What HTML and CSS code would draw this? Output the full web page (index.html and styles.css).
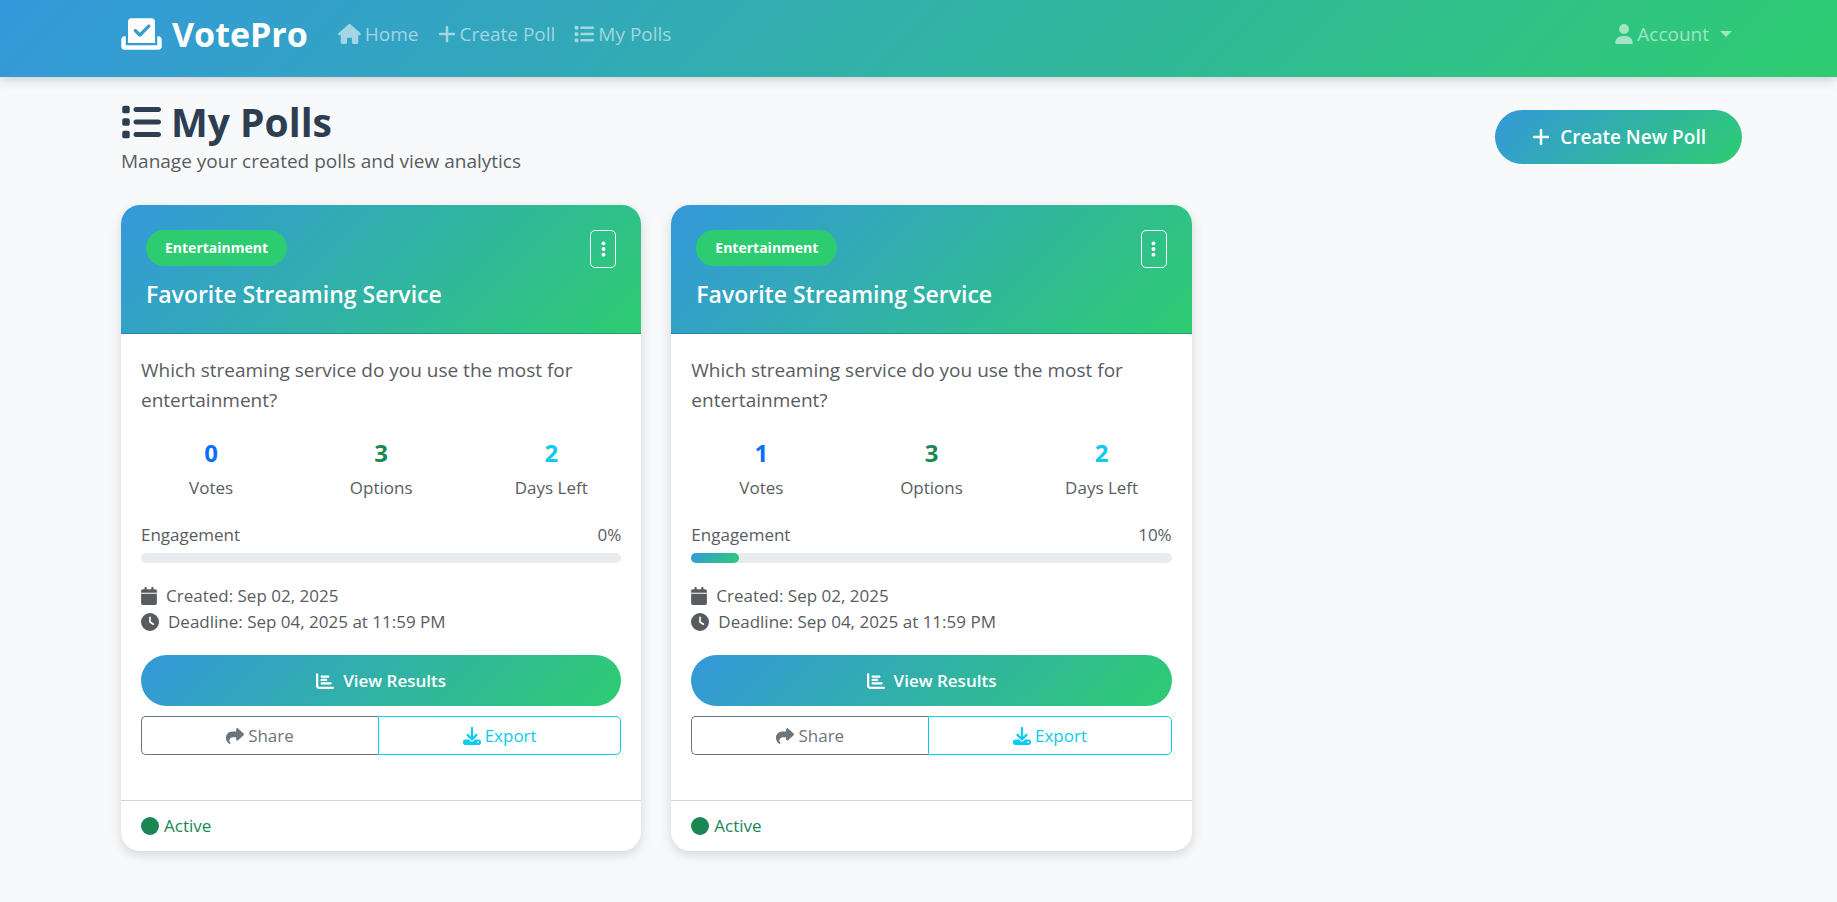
FILE: index.html
```html
<!DOCTYPE html>
<html lang="en">
<head>
<meta charset="utf-8">
<meta name="viewport" content="width=device-width, initial-scale=1">
<title>My Polls - VotePro</title>
<link rel="stylesheet" href="styles.css">
</head>
<body>
<svg class="sprite" aria-hidden="true">
  <symbol id="i-vote" viewBox="0 0 576 512"><path d="M96 80c0-26.500 21.500-48 48-48H432c26.500 0 48 21.500 48 48V384H96V80zm313 47c-9.400-9.400-24.600-9.400-33.900 0l-111 111-47-47c-9.400-9.400-24.600-9.400-33.900 0s-9.400 24.600 0 33.900l64 64c9.400 9.400 24.600 9.400 33.900 0L409 161c9.400-9.400 9.400-24.600 0-33.900zM0 336c0-26.500 21.500-48 48-48H64V416H512V288h16c26.500 0 48 21.500 48 48v96c0 26.500-21.500 48-48 48H48c-26.500 0-48-21.500-48-48V336z"/></symbol>
  <symbol id="i-home" viewBox="0 0 576 512"><path d="M575.800 255.500c0 18-15 32.100-32 32.100h-32l.7 160.200c0 2.700-.2 5.400-.5 8.100V472c0 22.100-17.900 40-40 40H456c-1.100 0-2.200 0-3.300-.1c-1.400 .1-2.800 .1-4.200 .1H416 392c-22.100 0-40-17.900-40-40V448 384c0-17.700-14.300-32-32-32H256c-17.700 0-32 14.300-32 32v64 24c0 22.100-17.900 40-40 40H160 128.100c-1.500 0-3-.1-4.500-.2c-1.200 .1-2.400 .2-3.600 .2H104c-22.100 0-40-17.900-40-40V360c0-.9 0-1.900 .1-2.800V287.600H32c-18 0-32-14-32-32.100c0-9 3-17 10-24L266.400 8c7-7 15-8 22-8s15 2 21 7L564.800 231.500c8 7 12 15 11 24z"/></symbol>
  <symbol id="i-plus" viewBox="0 0 448 512"><path d="M256 80c0-17.700-14.300-32-32-32s-32 14.300-32 32V224H48c-17.700 0-32 14.300-32 32s14.300 32 32 32H192V432c0 17.700 14.300 32 32 32s32-14.300 32-32V288H400c17.700 0 32-14.300 32-32s-14.300-32-32-32H256V80z"/></symbol>
  <symbol id="i-list" viewBox="0 0 512 512"><path d="M40 48C26.700 48 16 58.700 16 72v48c0 13.300 10.700 24 24 24H88c13.300 0 24-10.700 24-24V72c0-13.300-10.700-24-24-24H40zM192 64c-17.700 0-32 14.300-32 32s14.300 32 32 32H480c17.700 0 32-14.300 32-32s-14.300-32-32-32H192zm0 160c-17.700 0-32 14.300-32 32s14.300 32 32 32H480c17.700 0 32-14.300 32-32s-14.300-32-32-32H192zm0 160c-17.700 0-32 14.300-32 32s14.300 32 32 32H480c17.700 0 32-14.300 32-32s-14.300-32-32-32H192zM16 232v48c0 13.300 10.700 24 24 24H88c13.300 0 24-10.700 24-24V232c0-13.300-10.700-24-24-24H40c-13.300 0-24 10.700-24 24zM40 368c-13.300 0-24 10.700-24 24v48c0 13.300 10.700 24 24 24H88c13.300 0 24-10.700 24-24V392c0-13.300-10.700-24-24-24H40z"/></symbol>
  <symbol id="i-user" viewBox="0 0 448 512"><path d="M224 256A128 128 0 1 0 224 0a128 128 0 1 0 0 256zm-45.700 48C79.800 304 0 383.800 0 482.300C0 498.700 13.300 512 29.700 512H418.300c16.400 0 29.700-13.300 29.700-29.700C448 383.800 368.200 304 269.700 304H178.300z"/></symbol>
  <symbol id="i-dots" viewBox="0 0 128 512"><path d="M64 360a56 56 0 1 0 0 112 56 56 0 1 0 0-112zm0-160a56 56 0 1 0 0 112 56 56 0 1 0 0-112zM120 96A56 56 0 1 0 8 96a56 56 0 1 0 112 0z"/></symbol>
  <symbol id="i-calendar" viewBox="0 0 448 512"><path d="M96 32V64H48C21.500 64 0 85.500 0 112v48H448V112c0-26.500-21.500-48-48-48H352V32c0-17.700-14.300-32-32-32s-32 14.300-32 32V64H160V32c0-17.700-14.300-32-32-32S96 14.300 96 32zM448 192H0V464c0 26.500 21.500 48 48 48H400c26.500 0 48-21.500 48-48V192z"/></symbol>
  <symbol id="i-clock" viewBox="0 0 512 512"><path d="M256 0a256 256 0 1 1 0 512A256 256 0 1 1 256 0zM232 120V256c0 8 4 15.500 10.700 20l96 64c11 7.400 25.900 4.400 33.300-6.700s4.400-25.900-6.700-33.300L280 243.200V120c0-13.300-10.700-24-24-24s-24 10.700-24 24z"/></symbol>
  <symbol id="i-chart" viewBox="0 0 512 512"><path d="M32 32c17.700 0 32 14.300 32 32V400c0 8.800 7.200 16 16 16H480c17.700 0 32 14.300 32 32s-14.300 32-32 32H80c-44.200 0-80-35.800-80-80V64C0 46.300 14.300 32 32 32zm96 96c0-17.700 14.300-32 32-32l192 0c17.700 0 32 14.300 32 32s-14.300 32-32 32l-192 0c-17.700 0-32-14.300-32-32zm32 64H288c17.700 0 32 14.300 32 32s-14.300 32-32 32H160c-17.700 0-32-14.300-32-32s14.300-32 32-32zm0 96H416c17.700 0 32 14.300 32 32s-14.300 32-32 32H160c-17.700 0-32-14.300-32-32s14.300-32 32-32z"/></symbol>
  <symbol id="i-share" viewBox="0 0 512 512"><path d="M307 34.800c-11.500 5.100-19 16.600-19 29.200v64H176C78.800 128 0 206.800 0 304C0 417.300 81.500 467.900 100.200 478.100c2.500 1.400 5.300 1.900 8.100 1.900c10.900 0 19.700-8.900 19.700-19.700c0-7.500-4.300-14.400-9.800-19.500C108.800 431.900 96 414.400 96 384c0-53 43-96 96-96h96v64c0 12.600 7.400 24.100 19 29.200s25 3 34.400-5.400l160-144c6.700-6.100 10.600-14.700 10.600-23.800s-3.800-17.700-10.600-23.800l-160-144c-9.400-8.500-22.900-10.600-34.400-5.400z"/></symbol>
  <symbol id="i-download" viewBox="0 0 512 512"><path d="M288 32c0-17.700-14.300-32-32-32s-32 14.300-32 32V274.700l-73.400-73.400c-12.500-12.500-32.800-12.500-45.300 0s-12.500 32.800 0 45.300l128 128c12.500 12.500 32.800 12.500 45.300 0l128-128c12.500-12.500 12.500-32.800 0-45.300s-32.800-12.500-45.300 0L288 274.700V32zM64 352c-35.300 0-64 28.700-64 64v32c0 35.300 28.700 64 64 64H448c35.300 0 64-28.700 64-64V416c0-35.300-28.700-64-64-64H346.500l-45.300 45.300c-25 25-65.500 25-90.500 0L165.500 352H64zm368 56a24 24 0 1 1 0 48 24 24 0 1 1 0-48z"/></symbol>
  <symbol id="i-circle" viewBox="0 0 512 512"><circle cx="256" cy="256" r="256"/></symbol>
</svg>

<header class="navbar">
  <a class="brand" href="#"><svg class="icon icon-wide-lg"><use href="#i-vote"/></svg>VotePro</a>
  <nav class="nav-links">
    <a class="nav-link" href="#"><svg class="icon icon-wide"><use href="#i-home"/></svg>Home</a>
    <a class="nav-link" href="#"><svg class="icon icon-narrow"><use href="#i-plus"/></svg>Create Poll</a>
    <a class="nav-link" href="#"><svg class="icon icon-square"><use href="#i-list"/></svg>My Polls</a>
  </nav>
  <button class="nav-link account" type="button"><svg class="icon icon-narrow"><use href="#i-user"/></svg>Account<span class="caret"></span></button>
</header>

<main class="page">
  <div class="page-head">
    <div>
      <h1 class="page-title"><svg class="icon icon-title"><use href="#i-list"/></svg>My Polls</h1>
      <p class="page-subtitle">Manage your created polls and view analytics</p>
    </div>
    <a class="btn-primary btn-create" href="#"><svg class="icon icon-square"><use href="#i-plus"/></svg>Create New Poll</a>
  </div>

  <div class="poll-grid">
    <article class="card">
      <div class="card-header">
        <div class="card-header-row">
          <span class="badge">Entertainment</span>
          <button class="menu-button" type="button" aria-label="Poll actions"><svg class="icon icon-dots"><use href="#i-dots"/></svg></button>
        </div>
        <h2 class="card-title">Favorite Streaming Service</h2>
      </div>
      <div class="card-body">
        <p class="question">Which streaming service do you use the most for entertainment?</p>
        <div class="stats">
          <div class="stat"><strong class="stat-value votes">0</strong><span>Votes</span></div>
          <div class="stat"><strong class="stat-value options">3</strong><span>Options</span></div>
          <div class="stat"><strong class="stat-value days">2</strong><span>Days Left</span></div>
        </div>
        <div class="engagement"><span>Engagement</span><span>0%</span></div>
        <div class="progress"><div class="progress-bar" style="width: 0%"></div></div>
        <div class="dates">
          <div class="date"><svg class="icon icon-sm-narrow"><use href="#i-calendar"/></svg>Created: Sep 02, 2025</div>
          <div class="date"><svg class="icon icon-sm"><use href="#i-clock"/></svg>Deadline: Sep 04, 2025 at 11:59 PM</div>
        </div>
        <a class="btn-primary btn-results" href="#"><svg class="icon icon-sm"><use href="#i-chart"/></svg>View Results</a>
        <div class="btn-group">
          <button class="btn-outline share" type="button"><svg class="icon icon-sm"><use href="#i-share"/></svg>Share</button>
          <button class="btn-outline export" type="button"><svg class="icon icon-sm"><use href="#i-download"/></svg>Export</button>
        </div>
      </div>
      <div class="card-footer"><svg class="icon icon-sm"><use href="#i-circle"/></svg>Active</div>
    </article>

    <article class="card">
      <div class="card-header">
        <div class="card-header-row">
          <span class="badge">Entertainment</span>
          <button class="menu-button" type="button" aria-label="Poll actions"><svg class="icon icon-dots"><use href="#i-dots"/></svg></button>
        </div>
        <h2 class="card-title">Favorite Streaming Service</h2>
      </div>
      <div class="card-body">
        <p class="question">Which streaming service do you use the most for entertainment?</p>
        <div class="stats">
          <div class="stat"><strong class="stat-value votes">1</strong><span>Votes</span></div>
          <div class="stat"><strong class="stat-value options">3</strong><span>Options</span></div>
          <div class="stat"><strong class="stat-value days">2</strong><span>Days Left</span></div>
        </div>
        <div class="engagement"><span>Engagement</span><span>10%</span></div>
        <div class="progress"><div class="progress-bar" style="width: 10%"></div></div>
        <div class="dates">
          <div class="date"><svg class="icon icon-sm-narrow"><use href="#i-calendar"/></svg>Created: Sep 02, 2025</div>
          <div class="date"><svg class="icon icon-sm"><use href="#i-clock"/></svg>Deadline: Sep 04, 2025 at 11:59 PM</div>
        </div>
        <a class="btn-primary btn-results" href="#"><svg class="icon icon-sm"><use href="#i-chart"/></svg>View Results</a>
        <div class="btn-group">
          <button class="btn-outline share" type="button"><svg class="icon icon-sm"><use href="#i-share"/></svg>Share</button>
          <button class="btn-outline export" type="button"><svg class="icon icon-sm"><use href="#i-download"/></svg>Export</button>
        </div>
      </div>
      <div class="card-footer"><svg class="icon icon-sm"><use href="#i-circle"/></svg>Active</div>
    </article>
  </div>
</main>
</body>
</html>
```

FILE: styles.css
```css
:root {
  --gradient: linear-gradient(135deg, #3498db 0%, #2ecc71 100%);
  --muted: #595c5f;
}

* { box-sizing: border-box; }

body {
  margin: 0;
  background: #f8f9fb;
  color: #212529;
  font-family: "Segoe UI", "Open Sans", "Noto Sans", sans-serif;
  font-size: 19px;
  line-height: 30px;
}

h1, h2, p { margin: 0; }
a { text-decoration: none; }
button { font: inherit; cursor: pointer; }

.sprite { display: none; }
.icon { flex: none; fill: currentColor; }
.icon-wide-lg { width: 41px; height: 36px; }
.icon-wide { width: 23px; height: 20px; }
.icon-square { width: 20px; height: 20px; }
.icon-narrow { width: 18px; height: 20px; }
.icon-title { width: 40px; height: 40px; }
.icon-sm { width: 18px; height: 18px; }
.icon-sm-narrow { width: 16px; height: 18px; }
.icon-dots { width: 5px; height: 18px; }

.navbar {
  display: flex;
  align-items: center;
  padding: 7px 95px 16px 121px;
  background: var(--gradient);
  box-shadow: 0 2px 12px rgba(0, 0, 0, 0.2);
}

.brand {
  display: flex;
  align-items: center;
  gap: 10px;
  margin-right: 30px;
  color: #fff;
  font-size: 34px;
  font-weight: 700;
  line-height: 54px;
}

.nav-links { display: flex; gap: 19px; flex: 1; }

.nav-link {
  display: flex;
  align-items: center;
  gap: 4px;
  padding: 0;
  border: 0;
  background: none;
  color: rgba(255, 255, 255, 0.55);
}

.account { margin-right: 10px; }

.caret {
  margin-left: 7px;
  border-top: 6px solid;
  border-right: 6px solid transparent;
  border-left: 6px solid transparent;
}

.page { padding: 20px 95px 50px 121px; }

.page-head {
  display: flex;
  justify-content: space-between;
  align-items: center;
  margin-bottom: 29px;
}

.page-title {
  display: flex;
  align-items: center;
  gap: 10px;
  color: #2c3e50;
  font-size: 39px;
  font-weight: 700;
  line-height: 49px;
}

.page-subtitle { color: var(--muted); }

.btn-primary {
  display: flex;
  justify-content: center;
  align-items: center;
  gap: 9px;
  border-radius: 30px;
  background: var(--gradient);
  color: #fff;
  font-weight: 600;
}

.btn-create { padding: 12px 36px 12px; }

.poll-grid {
  display: grid;
  grid-template-columns: repeat(3, 1fr);
  gap: 30px;
}

.card {
  overflow: hidden;
  border-radius: 19px;
  background: #fff;
  box-shadow: 0 4px 12px rgba(0, 0, 0, 0.14);
}

.card-header {
  padding: 25px 25px 21px;
  border-bottom: 1px solid rgba(0, 0, 0, 0.17);
  background: var(--gradient);
  color: #fff;
}

.card-header-row {
  display: flex;
  justify-content: space-between;
  align-items: flex-start;
  height: 46px;
}

.badge {
  padding: 8px 19px;
  border-radius: 18px;
  background: #2ecc71;
  font-size: 14px;
  font-weight: 700;
  line-height: 20px;
}

.menu-button {
  display: flex;
  justify-content: center;
  align-items: center;
  width: 26px;
  height: 38px;
  padding: 0;
  border: 1px solid #fff;
  border-radius: 5px;
  background: none;
  color: #fff;
}

.card-title {
  font-size: 23px;
  font-weight: 600;
  line-height: 36px;
}

.card-body { padding: 21px 20px 45px; }
.question { margin-bottom: 22px; color: var(--muted); }

.stats {
  display: grid;
  grid-template-columns: repeat(3, 1fr);
  margin: 0 -15px 20px;
}

.stat {
  display: flex;
  flex-direction: column;
  align-items: center;
  gap: 5px;
  color: var(--muted);
  font-size: 17px;
  line-height: 28px;
}

.stat-value { font-size: 24px; line-height: 32px; }
.votes { color: #0d6efd; }
.options { color: #198754; }
.days { color: #0dcaf0; }

.engagement {
  display: flex;
  justify-content: space-between;
  margin-bottom: 5px;
  color: var(--muted);
  font-size: 17px;
  line-height: 26px;
}

.progress {
  height: 10px;
  border-radius: 5px;
  background: #e9ecef;
}

.progress-bar {
  height: 100%;
  border-radius: 5px;
  background: var(--gradient);
}

.dates {
  margin: 20px 0;
  color: var(--muted);
  font-size: 17px;
  line-height: 26px;
}

.date { display: flex; align-items: center; gap: 9px; }

.btn-results {
  padding: 10px;
  font-size: 17px;
  line-height: 31px;
}

.btn-group { display: flex; margin-top: 10px; }

.btn-outline {
  display: flex;
  justify-content: center;
  align-items: center;
  gap: 4px;
  padding: 5px 10px;
  border: 1px solid;
  background: none;
  font-size: 17px;
  line-height: 27px;
}

.share {
  flex: 237;
  border-right: 0;
  border-radius: 5px 0 0 5px;
  color: #6c757d;
}

.export {
  flex: 243;
  border-radius: 0 5px 5px 0;
  color: #0dcaf0;
}

.card-footer {
  display: flex;
  align-items: center;
  gap: 5px;
  padding: 12px 20px;
  border-top: 1px solid #d3d4d5;
  color: #198754;
  font-size: 17px;
  line-height: 26px;
}
```
